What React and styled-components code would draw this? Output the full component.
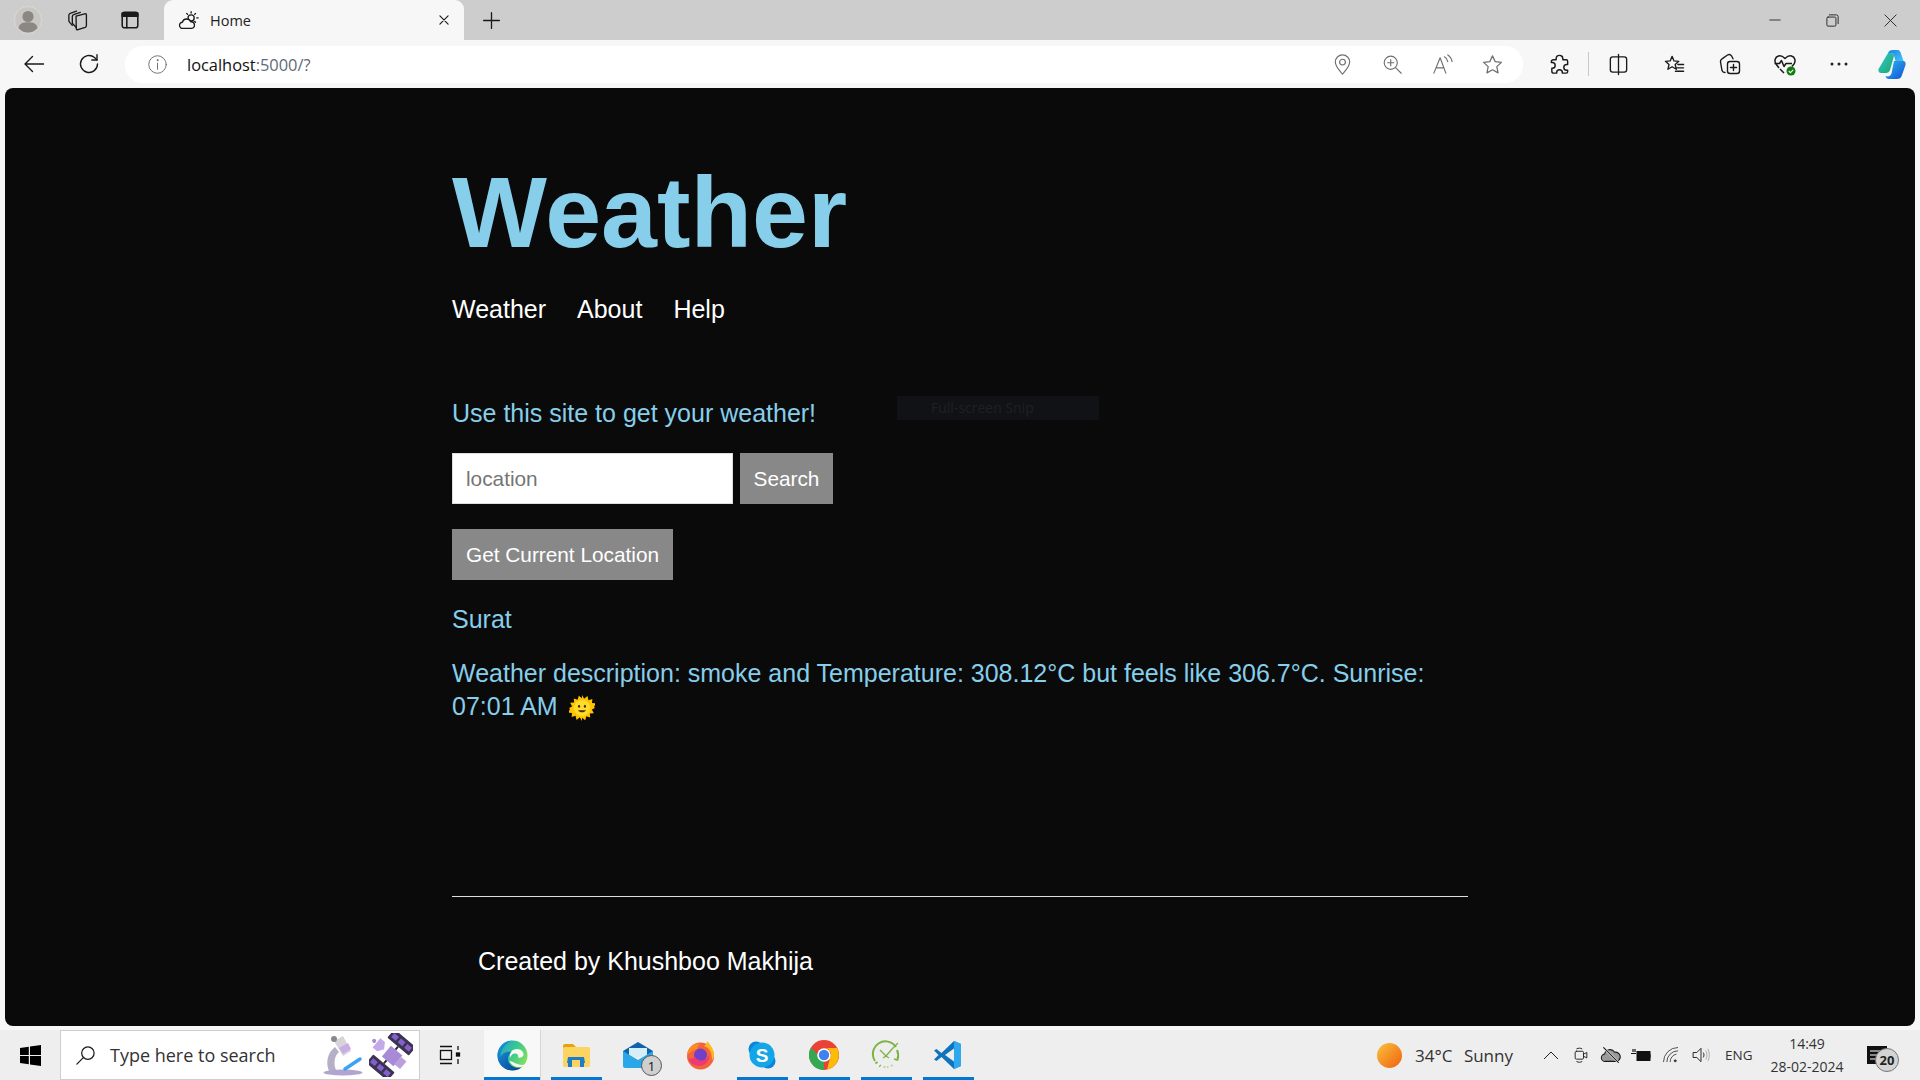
import React from "react";
import styled, { createGlobalStyle } from "styled-components";

const Global = createGlobalStyle`
  html, body { margin: 0; padding: 0; background: #f7f7f7; }
  #root { width: 1920px; height: 1080px; overflow: hidden; }
  * { box-sizing: border-box; }
`;
const Screen = styled.div`
  width: 1920px; height: 1080px; display: flex; flex-direction: column;
  background: #f7f7f7; font-family: "Liberation Sans", Arial, sans-serif;
`;
const TabStrip = styled.div`
  height: 40px; background: #cdcdcd; display: flex; align-items: center; padding-left: 14px;
`;
const StripButton = styled.div`
  width: ${p => p.$w || 53}px; height: 40px; display: flex; align-items: center; justify-content: ${p => p.$left ? "flex-start" : "center"};
`;
const Tab = styled.div`
  width: 300px; height: 40px; margin-left: 16px; background: #f7f7f7; border-radius: 9px 9px 0 0;
  display: flex; align-items: center; padding: 0 13px 0 14px; position: relative;
`;
const TabTitle = styled.span`
  font: 14.5px "Open Sans", sans-serif; color: #222; margin-left: 11px; flex: 1;
`;
const WindowControls = styled.div`
  margin-left: auto; display: flex; padding-right: 1px;
`;
const WinBtn = styled.div`
  width: 57.5px; height: 40px; display: flex; align-items: center; justify-content: center;
`;
const Toolbar = styled.div`
  height: 48px; display: flex; align-items: center; padding-left: 12px; background: #f7f7f7;
`;
const NavBtn = styled.div`
  width: ${p => p.$w || 56}px; height: 40px; display: flex; align-items: center; justify-content: center; flex: none;
`;
const Address = styled.div`
  width: 1398px; height: 37px; margin-left: 3px; background: #fff; border-radius: 18px;
  display: flex; align-items: center; padding-left: 22px; flex: none;
`;
const Url = styled.div`
  font: 16.4px "Open Sans", sans-serif; margin-left: 19px; flex: 1; color: #111;
  span { color: #5f6b78; }
`;
const AddrIcons = styled.div`
  display: flex; padding-right: 6px;
`;
const AddrIcon = styled.div`
  width: 50px; height: 37px; display: flex; align-items: center; justify-content: center;
`;
const ToolIcons = styled.div`
  display: flex; align-items: center; margin-left: 8px;
`;
const ToolIcon = styled.div`
  width: ${p => p.$w || 55}px; height: 40px; display: flex; align-items: center; justify-content: center; position: relative;
`;
const Separator = styled.div`
  width: 1px; height: 24px; background: #c8c8c8; margin: 0 2px 0 1px;
`;
const Page = styled.main`
  flex: 1; margin: 0 5px; background: #0a0a0a; border-radius: 8px; position: relative; color: #87ceeb;
`;
const Column = styled.div`
  width: 1016px; margin: 0 auto; display: flex; flex-direction: column; align-items: flex-start;
`;
const Title = styled.h1`
  margin: 67px 0 0; font-size: 100.6px; line-height: 115px; font-weight: 700; color: #87ceeb;
`;
const Nav = styled.nav`
  display: flex; gap: 31px; margin-top: 25px; font-size: 25px; line-height: 29px; color: #fff;
`;
const Lead = styled.p`
  margin: 75px 0 0; font-size: 25px; line-height: 29px;
`;
const SearchForm = styled.form`
  display: flex; gap: 7px; margin-top: 25px;
`;
const Field = styled.input`
  width: 281px; height: 51px; border: 1px solid #ddd; background: #fff; padding: 0 13px; outline: none;
  font: 20.8px "Liberation Sans", sans-serif; color: #333;
  &::placeholder { color: #757575; opacity: 1; }
`;
const Btn = styled.button`
  height: 51px; padding: 0 14px; border: 0; background: #888; color: #fff;
  font: 20.8px "Liberation Sans", sans-serif;
`;
const SearchBtn = styled(Btn)`
  width: 93px; padding: 0;
`;
const LocationBtn = styled(Btn)`
  margin-top: 25px;
`;
const Place = styled.p`
  margin: 25px 0 0; font-size: 25px; line-height: 29px;
`;
const Report = styled.p`
  margin: 23px 0 0; font-size: 25px; line-height: 33px;
  svg { vertical-align: -6px; margin-left: 4px; }
`;
const Rule = styled.hr`
  width: 100%; margin: 173px 0 0; border: 0; border-top: 1px solid #ddd;
`;
const Credit = styled.p`
  margin: 50px 0 0 26px; font-size: 25px; line-height: 29px; color: #fff;
`;
const SnipTip = styled.div`
  position: absolute; left: 892px; top: 308px; width: 202px; height: 24px; background: #111216;
  color: #1f2025; font: 14px "Open Sans", sans-serif; line-height: 24px; padding-left: 34px;
`;
const Taskbar = styled.footer`
  height: 50px; margin-top: 4px; background: #eeeeee; display: flex; align-items: stretch;
`;
const StartBtn = styled.div`
  width: 60px; display: flex; align-items: center; justify-content: center;
`;
const SearchBox = styled.div`
  width: 360px; background: #fff; border: 1px solid #cfcfcf; display: flex; align-items: center; padding-left: 13px;
`;
const SearchText = styled.span`
  font: 18px "Open Sans", sans-serif; color: #333; margin-left: 13px; flex: 1;
`;
const TaskView = styled.div`
  width: 64px; display: flex; align-items: center; justify-content: center; padding-right: 5px;
`;
const AppSlot = styled.div`
  width: ${p => p.$w || 62}px; position: relative; display: flex; align-items: center; justify-content: center;
  background: ${p => p.$active ? "#f8f8f8" : "transparent"};
  ${p => p.$active ? "border-right: 1px solid #d6d6d6; margin-right: 4px;" : ""}
  &::after {
    content: ""; position: absolute; bottom: 0; height: 3px; background: #0078d4;
    left: ${p => p.$active ? 0 : "6px"}; right: ${p => p.$active ? 0 : "5px"};
    display: ${p => p.$open ? "block" : "none"};
  }
`;
const Count = styled.span`
  position: absolute; left: 34px; top: 25px; width: 21px; height: 21px; border-radius: 50%;
  background: #cfcfcf; border: 1px solid #555; color: #111; font: 13px "Open Sans", sans-serif;
  display: flex; align-items: center; justify-content: center;
`;
const Tray = styled.div`
  margin-left: auto; display: flex; align-items: center; padding-right: 21px;
`;
const Weather = styled.span`
  font: 17px "Open Sans", sans-serif; color: #333; margin: 0 23px 0 13px; word-spacing: 7px; white-space: pre;
`;
const TrayIcon = styled.div`
  width: 30px; display: flex; align-items: center; justify-content: center;
`;
const Lang = styled.span`
  font: 13.5px "Open Sans", sans-serif; color: #333; margin: 0 0 0 9px; width: 37px;
`;
const Clock = styled.div`
  width: 90px; text-align: center; font: 14px/23px "Open Sans", sans-serif; color: #333;
`;
const Notif = styled.div`
  width: 32px; margin-left: 15px; position: relative; display: flex; align-items: center;
`;
const NotifCount = styled.span`
  position: absolute; left: 8px; top: 2px; width: 24px; height: 24px; border-radius: 50%; background: #d4d4d4; border: 1px solid #777;
  font: 700 13px "Open Sans", sans-serif; color: #222; display: flex; align-items: center; justify-content: center;
`;

const S = ({ size = 20, vb = 24, sw = 1.5, c = "#1a1a1a", children }) => (
  <svg width={size} height={size} viewBox={`0 0 ${vb} ${vb}`} fill="none" stroke={c} strokeWidth={sw} strokeLinecap="round" strokeLinejoin="round">{children}</svg>
);
const G = "#6f6f6f";

const SunFace = () => (
  <svg width="26" height="26" viewBox="0 0 24 24">
    <path fill="#ffc400" d="M12 0l2 3.400 3-2.400 1 3.800 3.600-1.200-.4 3.800 3.700.2-1.800 3.400L24 12l-2.900 1.400 1.800 3.400-3.700.2.400 3.800-3.600-1.200-1 3.800-3-2.400L12 24l-2-3.400-3 2.400-1-3.800-3.600 1.200.4-3.800-3.700-.2 1.800-3.400L0 12l2.900-1.400L1.100 7.200l3.700-.2-.4-3.800L8 4.400l1-3.800 3 2.400z" />
    <circle cx="12" cy="12" r="7.500" fill="#ffdb2e" />
    <ellipse cx="9.300" cy="10.300" rx="1" ry="1.400" fill="#4a3000" /><ellipse cx="14.700" cy="10.300" rx="1" ry="1.400" fill="#4a3000" />
    <path d="M8.300 14c1.500 2.600 5.900 2.600 7.400 0z" fill="#4a3000" />
  </svg>
);

export default function App() {
  return (
    <Screen>
      <Global />
      <TabStrip>
        <StripButton $w={28} $left>
          <svg width="28" height="28" viewBox="0 0 28 28">
            <circle cx="14" cy="14" r="13.500" fill="#c9c7c3" stroke="#d9d8d5" />
            <circle cx="14" cy="10.500" r="5.600" fill="#8b8884" />
            <path d="M4.500 22c1-5 5-5.800 9.500-5.800s8.500.8 9.500 5.800c-2.500 3-6 4.500-9.500 4.500S7 25 4.500 22z" fill="#8b8884" />
          </svg>
        </StripButton>
        <StripButton $w={70}>
          <S size={23} sw={1.4}>
            <path d="M10.500 7.500l9-2.500c1-.3 1.800.2 1.800 1.300v11c0 .9-.5 1.500-1.300 1.800l-7.500 2.500c-1 .3-1.800-.2-1.800-1.300z" />
            <path d="M10.500 19L7.500 16c-.6-.6-.9-1.200-.9-2V7.800c0-1 .5-1.700 1.400-2l7-2.300" />
            <path d="M6.600 17L3.800 14c-.5-.6-.8-1.200-.8-2V6.500c0-1 .5-1.700 1.400-2l6.600-2.200" />
          </S>
        </StripButton>
        <StripButton $w={36}>
          <S size={22} sw={1.700}><rect x="3.500" y="3.500" width="17" height="17" rx="2.500" /><path d="M3.500 4.500h17v3.500h-17z" fill="#1a1a1a" /><path d="M8.500 8v12.500" /></S>
        </StripButton>
        <Tab>
          <S size={21}><circle cx="15" cy="9" r="3.500" /><path d="M15 2v1.500M21.500 9H23M20 4l-1 1M10 4l1 1M20 14l-1-1" /><path d="M5.500 21a3.500 3.500 0 0 1-.5-7 5 5 0 0 1 9.500-.5 3.700 3.700 0 0 1 1 7.500z" fill="#f7f7f7" /></S>
          <TabTitle>Home</TabTitle>
          <S size={14} sw={2}><path d="M5 5l14 14M19 5L5 19" /></S>
        </Tab>
        <StripButton $w={54}>
          <S size={21} sw={1.500}><path d="M12 3v18M3 12h18" /></S>
        </StripButton>
        <WindowControls>
          <WinBtn><S size={14} sw={1.400}><path d="M3 12h18" /></S></WinBtn>
          <WinBtn><S size={15} sw={1.400}><rect x="3" y="6.500" width="14.500" height="14.500" rx="2" /><path d="M7 3h11a3 3 0 0 1 3 3v11" /></S></WinBtn>
          <WinBtn><S size={15} sw={1.400}><path d="M3 3l18 18M21 3L3 21" /></S></WinBtn>
        </WindowControls>
      </TabStrip>

      <Toolbar>
        <NavBtn $w={44}><S size={24} sw={1.400}><path d="M21.500 12H3M10.500 4.500L3 12l7.500 7.500" /></S></NavBtn>
        <NavBtn $w={66}><S size={24} sw={1.400}><path d="M20.500 12a8.500 8.500 0 1 1-3-6.500L20 8" /><path d="M20 2.800V8h-5.200" /></S></NavBtn>
        <Address>
          <S size={21} sw={1.100} c={G}><circle cx="12" cy="12" r="10" /><path d="M12 10.500v7" /><circle cx="12" cy="7" r=".6" fill={G} /></S>
          <Url>localhost<span>:5000/?</span></Url>
          <AddrIcons>
            <AddrIcon><S size={23} sw={1.200} c={G}><path d="M12 22c-4-4.500-7.500-8-7.500-12.500a7.500 7.500 0 0 1 15 0C19.500 14 16 17.500 12 22z" /><circle cx="12" cy="9.500" r="3" /></S></AddrIcon>
            <AddrIcon><S size={21} sw={1.300} c={G}><circle cx="10" cy="10" r="7.500" /><path d="M15.500 15.500L22 22M10 6.500v7M6.500 10h7" /></S></AddrIcon>
            <AddrIcon><S size={23} sw={1.200} c={G}><path d="M3 21L9.500 5 15.500 21M5.500 15.500h8" /><path d="M14 4c2 1 3 2.500 3.500 5M17.500 2c2.500 1.500 4 4 4.500 7" /></S></AddrIcon>
            <AddrIcon><S size={23} sw={1.300} c={G}><path d="M12 3l2.800 6 6.500.8-4.800 4.400 1.300 6.500L12 17.500l-5.800 3.200 1.300-6.500-4.800-4.400 6.500-.8z" /></S></AddrIcon>
          </AddrIcons>
        </Address>
        <ToolIcons>
          <ToolIcon $w={56} ><S size={23} sw={1.500}><path d="M8.500 7V6a3.500 3.500 0 0 1 7 0v1h3.500a1.500 1.500 0 0 1 1.500 1.500V12h-1a3 3 0 0 0 0 6h1v1.500a1.500 1.500 0 0 1-1.500 1.500H15v-.5a3 3 0 0 0-6 0v.5H6a2 2 0 0 1-2-2v-3h.5a3 3 0 0 0 0-6H3.500V9A2 2 0 0 1 5.500 7z" /></S></ToolIcon>
          <Separator />
          <ToolIcon $w={55}><S size={23} sw={1.400}><path d="M11 4H6a2.500 2.500 0 0 0-2.500 2.500v11A2.500 2.500 0 0 0 6 20h5M13 4h5a2.500 2.500 0 0 1 2.500 2.500v11A2.500 2.500 0 0 1 18 20h-5M12 1.500v21" /></S></ToolIcon>
          <ToolIcon $w={56}><S size={23} sw={1.400}><path d="M9.500 3.500l2 4.800 5 .4-3.800 3.300 1.200 5-4.400-2.700-4.400 2.700 1.200-5L2.500 8.700l5-.4zM15.500 12h6M14.500 15.500h7M13 19h8.500" /></S></ToolIcon>
          <ToolIcon $w={55}><S size={24} sw={1.400}><rect x="9.500" y="9.500" width="12" height="12" rx="2.500" /><path d="M15.500 12.500v6M12.500 15.500h6" /><path d="M7 20.500a3 3 0 0 1-3-2L2.500 10a3 3 0 0 1 1.500-3.200l5.500-3.800a3 3 0 0 1 4 .8l1.500 3" /></S></ToolIcon>
          <ToolIcon $w={55}>
            <svg width="26" height="26" viewBox="0 0 26 26" fill="none">
              <path d="M7 17l-3-4c-2-3-1-7 2.500-8 2.500-.7 4.500.5 6.500 2.500C15 5.500 17 4.300 19.500 5c3.500 1 4.500 5 2.500 8l-2 2.500M2.500 12.500h5l2-3 2.500 6 2-3h6M8 18l4 4" stroke="#1a1a1a" strokeWidth="1.500" strokeLinejoin="round" />
              <circle cx="19" cy="20" r="4.500" fill="#107c10" />
              <path d="M16.800 20l1.600 1.600 2.800-2.800" stroke="#fff" strokeWidth="1.100" />
            </svg>
          </ToolIcon>
          <ToolIcon $w={54}><svg width="18" height="4" viewBox="0 0 18 4"><circle cx="2" cy="2" r="1.500" fill="#222" /><circle cx="9" cy="2" r="1.500" fill="#222" /><circle cx="16" cy="2" r="1.500" fill="#222" /></svg></ToolIcon>
          <ToolIcon $w={52}>
            <svg width="30" height="31" viewBox="0 0 30 31">
              <defs>
                <linearGradient id="cpA" x1="0" y1="0" x2="1" y2="1"><stop offset="0" stopColor="#37c6d0" /><stop offset="1" stopColor="#19a968" /></linearGradient>
                <linearGradient id="cpB" x1="0" y1="0" x2="1" y2="1"><stop offset="0" stopColor="#1a7ff0" /><stop offset="1" stopColor="#4fd0f5" /></linearGradient>
                <linearGradient id="cpC" x1="0" y1="0" x2="1" y2="1"><stop offset="0" stopColor="#29b9f5" /><stop offset="1" stopColor="#1450d0" /></linearGradient>
              </defs>
              <path d="M11 4c1-2 2-3 5-3h4c3 0 3.500 2 4.500 5l3 9H22c-2 0-3-1-3.500-3l-1.500-5.500c-.5-1.500-1.500-2.500-3-2.500z" fill="url(#cpB)" />
              <path d="M11 4h3c2 0 3 1.500 3 3L13 21c-.8 2-2 3-4 3H4c-2 0-3-2-2.500-4z" fill="url(#cpA)" />
              <path d="M17 12h9c2.500 0 3 2.500 2.500 4L25 26c-1 3-2.500 4-5 4h-8c-2 0-3-1-3.500-3 3 1 5 0 6-2.500z" fill="url(#cpC)" />
            </svg>
          </ToolIcon>
        </ToolIcons>
      </Toolbar>

      <Page>
        <Column>
          <Title>Weather</Title>
          <Nav><span>Weather</span><span>About</span><span>Help</span></Nav>
          <Lead>Use this site to get your weather!</Lead>
          <SearchForm>
            <Field placeholder="location" readOnly />
            <SearchBtn type="button">Search</SearchBtn>
          </SearchForm>
          <LocationBtn type="button">Get Current Location</LocationBtn>
          <Place>Surat</Place>
          <Report>Weather description: smoke and Temperature: 308.12°C but feels like 306.7°C. Sunrise: 07:01 AM <SunFace /></Report>
          <Rule />
          <Credit>Created by Khushboo Makhija</Credit>
        </Column>
        <SnipTip>Full-screen Snip</SnipTip>
      </Page>

      <Taskbar>
        <StartBtn>
          <svg width="21" height="21" viewBox="0 0 21 21"><path fill="#000" d="M0 3l8.800-1.200v8.100H0zM10 1.600L21 0v9.900H10zM0 11.100h8.800v8.100L0 18zM10 11.100h11V21l-11-1.600z" /></svg>
        </StartBtn>
        <SearchBox>
          <S size={23} sw={1.300}><circle cx="14.500" cy="9.500" r="6.500" /><path d="M10 14L3 21" /></S>
          <SearchText>Type here to search</SearchText>
          <svg width="42" height="44" viewBox="0 0 42 44" style={{ marginRight: 6 }}>
            <path d="M9 40c-5-9-3-20 5-26l4 5c-5 4-6 13-2 20z" fill="#b6b0c6" />
            <ellipse cx="22" cy="39.500" rx="19.500" ry="3" fill="#b3a3cf" />
            <path d="M13 8l9-5 8 15-8 5z" fill="#d6d3db" /><path d="M18 15l9-5 3 6-8 5z" fill="#c9aee6" />
            <circle cx="13" cy="6" r="3" fill="#8b8792" />
            <path d="M24 36l15-10" stroke="#3ea2ee" strokeWidth="3.500" strokeLinecap="round" />
          </svg>
          <svg width="44" height="44" viewBox="0 0 44 44" style={{ marginRight: 6 }}>
            <g transform="rotate(40 22 22)">
              <rect x="8" y="0" width="28" height="11" rx="1" fill="#3b3350" />
              <rect x="10.500" y="3" width="6" height="5" fill="#8460cf" /><rect x="19" y="3" width="6" height="5" fill="#8460cf" /><rect x="27.500" y="3" width="6" height="5" fill="#8460cf" />
              <rect x="8" y="33" width="28" height="11" rx="1" fill="#3b3350" />
              <rect x="10.500" y="36" width="6" height="5" fill="#8460cf" /><rect x="19" y="36" width="6" height="5" fill="#8460cf" /><rect x="27.500" y="36" width="6" height="5" fill="#8460cf" />
              <rect x="16" y="15" width="15" height="14" fill="#a78bd6" />
              <rect x="31" y="17" width="7" height="10" fill="#b7a0dc" />
              <path d="M21 11h2v4h-2zM21 29h2v4h-2z" fill="#2c2640" />
              <path d="M3 16h6l4 6-4 6H3z" fill="#c2a9ea" />
              <circle cx="0" cy="22" r="2" fill="#a88bd8" />
            </g>
          </svg>
        </SearchBox>
        <TaskView>
          <svg width="22" height="20" viewBox="0 0 22 20" fill="none" stroke="#111" strokeWidth="1.300"><path d="M1 1.500h12M1 18.500h12" /><rect x="1.500" y="5.500" width="11" height="9" /><path d="M19 1v4M19 14v5" /><rect x="17.500" y="8" width="3" height="3" fill="#111" /></svg>
        </TaskView>
        <AppSlot $w={57} $active $open>
          <svg width="31" height="31" viewBox="0 0 31 31">
            <defs>
              <linearGradient id="edA" x1="0" y1="0" x2="1" y2=".6"><stop offset="0" stopColor="#1f9bd8" /><stop offset=".55" stopColor="#38c98e" /><stop offset="1" stopColor="#7fe05f" /></linearGradient>
              <linearGradient id="edB" x1="0" y1="0" x2=".8" y2="1"><stop offset="0" stopColor="#1ea0e8" /><stop offset=".7" stopColor="#0e5fb0" /><stop offset="1" stopColor="#0b4a94" /></linearGradient>
            </defs>
            <circle cx="15.500" cy="15.500" r="15" fill="url(#edA)" />
            <path d="M15 .5C7 .5.500 7 .500 15.500c0 8 6 15 15 15 3.500 0 6.500-1 9-3-5 1-11-.5-13-6-1.500-4 .5-8 4-9.500-4-1-10 0-12 5 0-8 5-13 11.500-17z" fill="url(#edB)" />
            <path d="M13 18c-1-5 2-9 7-9 4 0 7 3 6.500 6-.3 2-3 3-5.500 2.500 1-2-.5-4-3-4-2.500 0-4 2-5 4.500z" fill="#f8f8f8" />
            <path d="M12.500 21c1.500 4 6 6.500 11 6 2.500-.3 4.500-1.500 5.500-3-3 1.500-7 1-10-.5-3-1.500-5.500-3-6.500-2.500z" fill="#f8f8f8" />
          </svg>
        </AppSlot>
        <AppSlot $open>
          <svg width="28" height="25" viewBox="0 0 28 25"><path d="M1 3a2 2 0 0 1 2-2h8l3 3v6H1z" fill="#e5a50a" /><rect x="1" y="4" width="27" height="20" rx="1.500" fill="#fcd462" /><path d="M6 14h16l1 6h-5v-3h-8v3H5z" fill="#1f7dc5" /><path d="M6 20h4v4H6zM18 20h4v4h-4z" fill="#1f7dc5" /></svg>
        </AppSlot>
        <AppSlot>
          <svg width="31" height="29" viewBox="0 0 31 29"><path d="M0 10L15 1l15 9v4H0z" fill="#0f63ac" /><path d="M6 7h18v9H6z" fill="#d7eef9" /><path d="M0 10l15 9 15-9v15a2 2 0 0 1-2 2H2a2 2 0 0 1-2-2z" fill="#2aa7e6" /></svg>
          <Count>1</Count>
        </AppSlot>
        <AppSlot>
          <svg width="29" height="30" viewBox="0 0 29 30">
            <circle cx="14.500" cy="16" r="13.500" fill="#f5633a" />
            <path d="M21 1c3 3 7 8 7 14 0 2-1 4-2 5C26 13 24 8 18 6c2-1 3-3 3-5z" fill="#ffb81f" />
            <path d="M1 15C2 8 8 3 14 4c-2 2-3 3-3 5-4 1-7 3-10 6z" fill="#ff8a22" />
            <circle cx="14.500" cy="15" r="6.500" fill="#7240c6" />
            <path d="M9 17c3 5 11 5 14-2 1 6-4 11-10 11-5 0-9-3-11-8 2 1 5 1 7-1z" fill="#ec3a74" />
          </svg>
        </AppSlot>
        <AppSlot $open>
          <svg width="28" height="28" viewBox="0 0 28 28">
            <circle cx="8" cy="8" r="7.500" fill="#0a85d9" /><circle cx="20" cy="20" r="7.500" fill="#0a85d9" />
            <circle cx="14" cy="14" r="12.500" fill="#12a5e8" />
            <text x="14" y="20.500" textAnchor="middle" fontFamily="Liberation Sans" fontWeight="700" fontSize="19" fill="#fff">S</text>
          </svg>
        </AppSlot>
        <AppSlot $open>
          <svg width="30" height="30" viewBox="0 0 30 30">
            <circle cx="15" cy="15" r="15" fill="#ea4335" />
            <path d="M15 30A15 15 0 0 1 2 7.500L9 15a6.500 6.500 0 0 0 6 6.500z" fill="#34a853" />
            <path d="M15 8h13a15 15 0 0 1-10 21.700L21 18a6.500 6.500 0 0 0-6-10z" fill="#fbbc05" />
            <circle cx="15" cy="15" r="6.800" fill="#fff" /><circle cx="15" cy="15" r="5.200" fill="#3f82ed" />
          </svg>
        </AppSlot>
        <AppSlot $open>
          <svg width="30" height="30" viewBox="0 0 30 30" fill="none" stroke="#7cb342" strokeWidth="2">
            <path d="M4 21A12 12 0 0 1 25 7" />
            <path d="M26 10a12 12 0 0 1 .5 9" />
            <path d="M23 19l3.500 1 1-3.500" strokeWidth="1.500" />
            <path d="M5 22l1 1.500M8.500 25.500l1 .8" strokeWidth="2.500" />
            <path d="M12.500 27h5M20 26l1.500-1" stroke="#b9d58e" strokeWidth="2" strokeDasharray="2 1.500" />
            <path d="M9 10l6 6 6-7M27 3l-6 6M15 16l-3 2M15 16l3 2" strokeWidth="1.300" />
          </svg>
        </AppSlot>
        <AppSlot $open>
          <svg width="30" height="30" viewBox="0 0 30 30">
            <path d="M1 10.500l2.500-1.500 5 4L21 1l7 3v22l-7 3-12.500-12-5 4L1 19.500 5.500 15z" fill="#0f74be" />
            <path d="M21 1l7 3v22l-7 3z" fill="#2fa8ee" />
            <path d="M21 8.500L12 15l9 6.500z" fill="#eeeeee" />
          </svg>
        </AppSlot>
        <Tray>
          <svg width="25" height="25" viewBox="0 0 25 25"><defs><linearGradient id="sunG" x1="0" y1="0" x2="1" y2="1"><stop offset="0" stopColor="#f8c33c" /><stop offset="1" stopColor="#f0600f" /></linearGradient></defs><circle cx="12.500" cy="12.500" r="12.500" fill="url(#sunG)" /></svg>
          <Weather>34°C Sunny</Weather>
          <TrayIcon><S size={18} sw={1.300}><path d="M3 17l9-9 9 9" /></S></TrayIcon>
          <TrayIcon><S size={20} sw={1.100}><rect x="5" y="7.500" width="10" height="9.500" rx="1.500" /><path d="M15 11l4-2v6.500l-4-2M7 4.500c2-1 4-1 6 0M7 20c2 1 4 1 6 0" /></S></TrayIcon>
          <TrayIcon><S size={22} sw={1.200}><path d="M6 19a4 4 0 0 1-1-8 6 6 0 0 1 11-2 5 5 0 0 1 2 10z" fill="#9a9a9a" /><path d="M4 4l16 16" stroke="#eeeeee" strokeWidth="2.500" /><path d="M4 4l16 16" /></S></TrayIcon>
          <TrayIcon><svg width="20" height="14" viewBox="0 0 20 14"><rect x="6" y="3.500" width="13" height="9" fill="#111" stroke="#111" /><path d="M0 5.500h5M2 1v3M4 1v3" stroke="#111" strokeWidth="1.200" /><rect x="19.500" y="6" width="1" height="4" fill="#111" /></svg></TrayIcon>
          <TrayIcon><S size={20} sw={1.100} c="#444"><path d="M3 20a17 17 0 0 1 17-17M7 20A13 13 0 0 1 20 7M11 20a9 9 0 0 1 7-9" /><circle cx="17" cy="19" r="1.200" fill="#111" /></S></TrayIcon>
          <TrayIcon><S size={20} sw={1.100}><path d="M3 9h4l5-5v16l-5-5H3z" /><path d="M15 9.500c.8 1.600.8 3.400 0 5" /><path d="M18 7c1.500 3 1.500 7 0 10M20.500 5c2 4 2 10 0 14" stroke="#aaa" /></S></TrayIcon>
          <Lang>ENG</Lang>
          <Clock>14:49<br />28-02-2024</Clock>
          <Notif>
            <svg width="20" height="18" viewBox="0 0 20 18"><path d="M0 0h20v18H0z" fill="#111" /><path d="M3 5h14M3 9h14M3 13h9" stroke="#fff" strokeWidth="1.200" /></svg>
            <NotifCount>20</NotifCount>
          </Notif>
        </Tray>
      </Taskbar>
    </Screen>
  );
}
